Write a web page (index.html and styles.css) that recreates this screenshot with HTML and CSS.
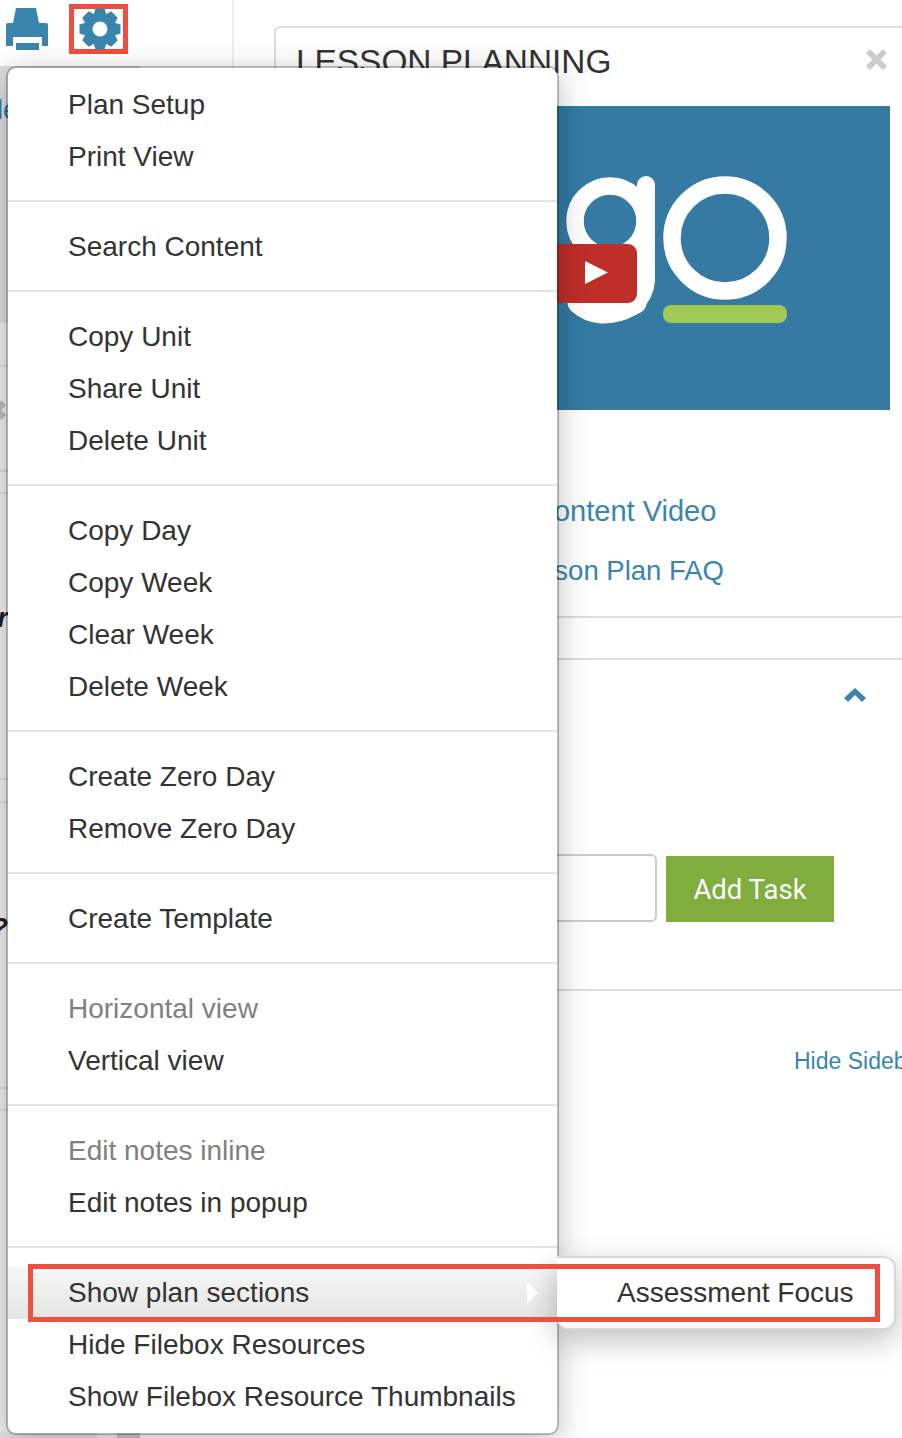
FILE: index.html
```html
<!DOCTYPE html>
<html>
<head>
  <title>Lesson Planning</title>
  <link rel="stylesheet" href="styles.css">
</head>
<body>

  <div class="page">

    <div class="sidebar">
      <div class="toolbar">
        <a class="print-btn">
          <svg width="42" height="42" viewBox="0 0 42 42">
            <path fill="#3a85ae" d="M10 0H30L33 15H7Z"/>
            <path fill="#3a85ae" d="M2 15H40Q42 15 42 17V38H36V29H7V38H0V17Q0 15 2 15Z"/>
            <path fill="#3a85ae" d="M10 35H33V42H10Z"/>
          </svg>
        </a>
        <a class="gear-btn">
          <svg width="42" height="42" viewBox="-21 -21 42 42">
            <g fill="#3a85ae">
              <circle r="16"/>
              <path d="M-4.500 -20.500H4.500L6.500 -14H-6.500Z"/>
              <path d="M-4.500 -20.500H4.500L6.500 -14H-6.500Z" transform="rotate(45)"/>
              <path d="M-4.500 -20.500H4.500L6.500 -14H-6.500Z" transform="rotate(90)"/>
              <path d="M-4.500 -20.500H4.500L6.500 -14H-6.500Z" transform="rotate(135)"/>
              <path d="M-4.500 -20.500H4.500L6.500 -14H-6.500Z" transform="rotate(180)"/>
              <path d="M-4.500 -20.500H4.500L6.500 -14H-6.500Z" transform="rotate(225)"/>
              <path d="M-4.500 -20.500H4.500L6.500 -14H-6.500Z" transform="rotate(270)"/>
              <path d="M-4.500 -20.500H4.500L6.500 -14H-6.500Z" transform="rotate(315)"/>
            </g>
            <circle r="7.500" fill="#fff"/>
          </svg>
        </a>
      </div>
      <div class="rows">
        <div class="row row-head"><span class="row-label head-label">Schedule</span></div>
        <div class="row h45"></div>
        <div class="row h105 row-close"><span class="row-label">&#10006;</span></div>
        <div class="row h22"></div>
        <div class="row h286 row-first"><span class="row-label">Teacher</span></div>
        <div class="row h23"></div>
        <div class="row h286 row-third"><span class="row-label">Why?</span></div>
        <div class="row h22"></div>
        <div class="row row-last"></div>
        <div class="foot">
          <div class="foot-a"></div>
          <div class="foot-b"></div>
          <div class="foot-c"></div>
        </div>
      </div>
    </div>

    <div class="main">
      <div class="card">
        <div class="card-title">
          <h2>LESSON PLANNING</h2>
          <svg class="close" width="21" height="21" viewBox="0 0 21 21"><path d="M4 0L10.500 6.500L17 0L21 4L14.500 10.500L21 17L17 21L10.500 14.500L4 21L0 17L6.500 10.500L0 4Z" fill="#ccc"/></svg>
        </div>
        <div class="video">
          <svg width="594" height="304" viewBox="0 0 594 304">
            <circle cx="314" cy="115" r="35" fill="none" stroke="#fff" stroke-width="17.500"/>
            <path d="M350 79V174A35 35 0 0 1 315 207" fill="none" stroke="#fff" stroke-width="18" stroke-linecap="round"/>
            <path d="M340 197Q320 208 305 207Q292 206 282 197" fill="none" stroke="#fff" stroke-width="21" stroke-linecap="round"/>
            <circle cx="429" cy="132" r="53" fill="none" stroke="#fff" stroke-width="17.500"/>
            <rect x="367" y="199" width="124" height="18" rx="8" fill="#a2c855"/>
            <rect x="240" y="138" width="101" height="59" rx="9" fill="#bf2e28"/>
            <path d="M289 155L312 166.500L289 178Z" fill="#fff"/>
          </svg>
        </div>
        <ul class="links">
          <li class="link-video"><a>Content Video</a></li>
          <li class="link-faq"><a>Lesson Plan FAQ</a></li>
        </ul>
        <hr class="rule rule-one">
        <hr class="rule rule-two">
        <div class="task-head">
          <svg width="22" height="14" viewBox="0 0 22 14"><path d="M0 10L11 0L22 10L18 14L11 7L4 14Z" fill="#3a85ae"/></svg>
        </div>
        <div class="task-form">
          <input class="task-input" type="text">
          <button class="task-btn">Add Task</button>
        </div>
        <hr class="rule rule-three">
        <div class="hide-row"><a>Hide Sidebar</a></div>
      </div>
    </div>

    <div class="menu">
      <ul class="menu-group">
        <li>Plan Setup</li>
        <li>Print View</li>
      </ul>
      <ul class="menu-group">
        <li>Search Content</li>
      </ul>
      <ul class="menu-group">
        <li>Copy Unit</li>
        <li>Share Unit</li>
        <li>Delete Unit</li>
      </ul>
      <ul class="menu-group">
        <li>Copy Day</li>
        <li>Copy Week</li>
        <li>Clear Week</li>
        <li>Delete Week</li>
      </ul>
      <ul class="menu-group">
        <li>Create Zero Day</li>
        <li>Remove Zero Day</li>
      </ul>
      <ul class="menu-group">
        <li>Create Template</li>
      </ul>
      <ul class="menu-group">
        <li class="off">Horizontal view</li>
        <li>Vertical view</li>
      </ul>
      <ul class="menu-group">
        <li class="off">Edit notes inline</li>
        <li>Edit notes in popup</li>
      </ul>
      <ul class="menu-group">
        <li class="has-sub">
          Show plan sections
          <span class="sub-arrow"></span>
          <div class="submenu">Assessment Focus</div>
          <div class="callout"></div>
        </li>
        <li>Hide Filebox Resources</li>
        <li>Show Filebox Resource Thumbnails</li>
      </ul>
    </div>

  </div>

</body>
</html>
```

FILE: styles.css
```css
* {
  box-sizing: border-box;
}

html, body {
  margin: 0;
  height: 100%;
  overflow: hidden;
}

body {
  font-family: "Liberation Sans", Arial, sans-serif;
  color: #333;
  background: #fff;
}

ul {
  list-style: none;
  margin: 0;
  padding: 0;
}

.page {
  position: relative;
  display: flex;
  align-items: flex-start;
  width: 902px;
  height: 1438px;
  overflow: hidden;
}

/* left column, mostly hidden by the menu */
.sidebar {
  width: 234px;
  height: 1430px;
  flex-shrink: 0;
  border-right: 2px solid #eee;
}

.toolbar {
  display: flex;
  align-items: flex-start;
  gap: 21px;
  height: 66px;
  padding: 4px 0 0 6px;
}

.print-btn {
  display: block;
  height: 42px;
  margin-top: 4px;
}

.print-btn svg,
.gear-btn svg {
  display: block;
}

.gear-btn {
  display: flex;
  align-items: center;
  justify-content: center;
  width: 59px;
  height: 50px;
  padding-left: 2px;
  border: 5px solid #ee4f3e;
}

.rows {
  width: 140px;
}

.row {
  background: #f0f0f0;
  border-bottom: 2px solid #ddd;
  font-size: 27px;
  line-height: 30px;
  overflow: hidden;
  white-space: nowrap;
}

.row-label {
  display: flex;
  justify-content: flex-end;
  width: 8px;
  font-style: italic;
  font-weight: bold;
  color: #222;
}

.row-head {
  height: 256px;
  padding-top: 29px;
  background: #dedede;
}

.head-label {
  width: 18px;
  font-style: normal;
  font-weight: normal;
  color: #2f7ba5;
}

.row-close {
  padding-top: 29px;
}

.row-close .row-label {
  font-style: normal;
  color: #bbb;
}

.row-first {
  padding-top: 109px;
}

.row-third {
  padding-top: 110px;
}

.row-last {
  height: 321px;
  border-bottom: none;
}

.h22 { height: 22px; }
.h23 { height: 23px; }
.h45 { height: 45px; }
.h105 { height: 105px; }
.h286 { height: 286px; }

.foot {
  display: flex;
  height: 6px;
}

.foot-a {
  width: 98px;
  background: #e4e4e4;
}

.foot-b {
  width: 20px;
  background: #f4f4f4;
}

.foot-c {
  width: 23px;
  background: #ccc;
}

/* right column */
.main {
  flex: 1;
  min-width: 0;
  padding: 26px 0 0 40px;
}

.card {
  width: 700px;
  height: 1390px;
  border: 2px solid #ddd;
  border-bottom: none;
  border-radius: 6px 0 0 0;
  padding: 0 0 0 20px;
}

.card-title {
  display: flex;
  justify-content: space-between;
  align-items: flex-start;
  width: 594px;
  height: 78px;
  padding-right: 3px;
}

.card-title h2 {
  margin: 14px 0 0;
  font-size: 33.400px;
  line-height: 40px;
  font-weight: normal;
}

.close {
  margin-top: 21px;
}

.video {
  width: 594px;
  height: 304px;
  background: #347aa3;
}

.video svg {
  display: block;
}

.links {
  margin-top: 71px;
  line-height: 60px;
  color: #3a85ae;
}

.link-video {
  margin-left: 237px;
  font-size: 29px;
}

.link-faq {
  margin-left: 214px;
  font-size: 27.500px;
}

.rule {
  border: none;
  border-top: 2px solid #ddd;
  margin: 0 0 0 -20px;
}

.rule-one {
  margin-top: 15px;
}

.rule-two {
  margin-top: 40px;
}

.task-head {
  display: flex;
  justify-content: flex-end;
  width: 570px;
  padding-top: 28px;
}

.task-form {
  display: flex;
  align-items: flex-end;
  gap: 9px;
  margin-top: 152px;
}

.task-input {
  width: 361px;
  height: 68px;
  border: 2px solid #ccc;
  border-radius: 6px;
}

.task-btn {
  width: 168px;
  height: 66px;
  border: none;
  background: #80ad3e;
  color: #fff;
  font-family: Roboto, "Liberation Sans", sans-serif;
  font-size: 27.500px;
}

.rule-three {
  margin-top: 67px;
}

.hide-row {
  margin: 55px 0 0 498px;
  font-size: 23px;
  line-height: 30px;
  color: #3a85ae;
  white-space: nowrap;
}

/* settings dropdown */
.menu {
  position: absolute;
  left: 6px;
  top: 66px;
  width: 553px;
  height: 1369px;
  padding: 11px 0 0;
  background: #fff;
  background-clip: padding-box;
  border: 2px solid rgba(0, 0, 0, .25);
  border-radius: 10px;
  box-shadow: 0 6px 30px rgba(0, 0, 0, .25);
  font-size: 28px;
  color: #333;
}

.menu-group {
  padding-bottom: 17px;
  margin-bottom: 19px;
  border-bottom: 2px solid #e5e5e5;
}

.menu-group:last-child {
  border-bottom: none;
}

.menu-group li {
  position: relative;
  height: 52px;
  line-height: 52px;
  padding-left: 60px;
  white-space: nowrap;
}

.menu-group li.off {
  color: #808080;
}

.has-sub {
  background: linear-gradient(#f7f7f7, #e4e4e4);
}

.sub-arrow {
  position: absolute;
  right: 19px;
  top: 15px;
  border-left: 11px solid #fff;
  border-top: 11px solid transparent;
  border-bottom: 11px solid transparent;
}

.submenu {
  position: absolute;
  left: 549px;
  top: -11px;
  width: 339px;
  height: 74px;
  padding-left: 60px;
  line-height: 70px;
  background: #fff;
  border: 2px solid #d8d8d8;
  border-left: none;
  border-radius: 0 12px 12px 12px;
  box-shadow: 0 10px 30px rgba(0, 0, 0, .25);
}

/* red annotation drawn over the open row */
.callout {
  position: absolute;
  left: 20px;
  top: -3px;
  width: 852px;
  height: 58px;
  border: 5px solid #ee4f3e;
}
```
